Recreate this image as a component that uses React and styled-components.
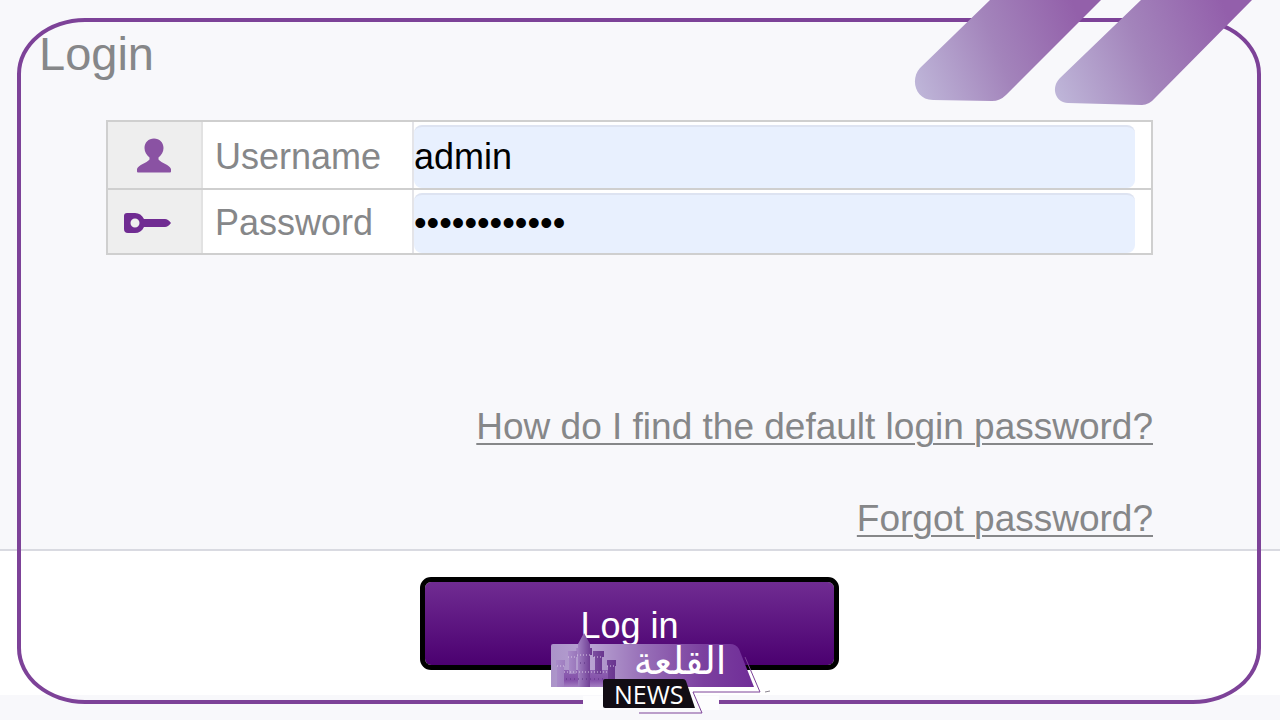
import React, { useState } from 'react';
import styled, { createGlobalStyle } from 'styled-components'

const GlobalStyle = createGlobalStyle`
  * {
    box-sizing: border-box;
  }
  body {
    margin: 0;
    background: #f8f8fb;
    font-family: "Liberation Sans", Arial, sans-serif;
  }
`;

const Page = styled.div`
  position: relative;
  min-height: 100vh;
  overflow: hidden;
`;

const Panel = styled.main`
  padding: 24px 127px 8px 106px;
  border-bottom: 2px solid #d9dae1;
`;

const Title = styled.h1`
  margin: 0 0 36px -67px;
  font-size: 47px;
  line-height: 60px;
  font-weight: 400;
  color: #868789;
`;

const Fields = styled.div`
  border: 2px solid #cfcfcf;
  background: #fff;
`;

const Field = styled.div`
  display: grid;
  grid-template-columns: 95px 211px 1fr;
  height: ${props => props.$height}px;

  & + & {
    border-top: 2px solid #cfcfcf;
  }
`;

const IconCell = styled.div`
  display: flex;
  align-items: center;
  justify-content: flex-end;
  padding: 2px 29px 0 0;
  background: #eee;
  border-right: 2px solid #e2e2e2;
`;

const Label = styled.label`
  display: flex;
  align-items: center;
  padding: 3px 0 0 12px;
  border-right: 2px solid #e4e4e8;
  font-size: 36px;
  color: #868789;
`;

const Input = styled.input`
  min-width: 0;
  margin: 3px 16px 0 0;
  padding: 0 0 2px;
  border: 0;
  border-top: 2px solid #dde3f1;
  border-radius: 8px;
  outline: none;
  background: #e8f0fe;
  color: #000;
  font-family: inherit;
  font-size: 36px;
`;

const Links = styled.nav`
  display: flex;
  flex-direction: column;
  align-items: flex-end;
  gap: 48px;
  padding-top: 150px;
`;

const HelpLink = styled.a`
  font-size: 37px;
  line-height: 44px;
  color: #868789;
  text-decoration-thickness: 2px;
  text-underline-offset: 4px;
`;

const Actions = styled.div`
  display: flex;
  justify-content: center;
  padding: 26px 127px 25px 106px;
  background: #fff;
`;

const LoginButton = styled.button`
  width: 419px;
  height: 93px;
  padding: 4px 0 0;
  border: 5px solid #000;
  border-radius: 11px;
  background: linear-gradient(#702c92, #4b0070) padding-box;
  color: #fff;
  font-family: inherit;
  font-size: 36px;
`;

const Frame = styled.div`
  position: absolute;
  inset: 18px 19px 16px 17px;
  border: 4px solid #7d4298;
  border-radius: 68px / 56px;
  pointer-events: none;
`;

const Stripes = styled.svg`
  position: absolute;
  top: 0;
  right: 20px;
  pointer-events: none;
`;

const Logo = styled.svg`
  position: absolute;
  bottom: 0;
  left: calc(50% - 60px);
  pointer-events: none;
`;

function UserIcon() {
  return (
    <svg width="36" height="36" viewBox="0 0 36 36" fill="#8a52a3" aria-hidden="true">
      <path d="M18 0.500c5.500 0 9.500 4 9.500 9.500 0 4-2 7-5 9.500v2c3 4 11 5 12.500 9.500v2.500q0 1-1 1H2q-1 0-1-1V31c1.500-4.500 9.500-5.500 12.500-9.500v-2c-3-2.500-5-5.500-5-9.500 0-5.500 4-9.500 9.500-9.500z" />
    </svg>
  );
}

function KeyIcon() {
  return (
    <svg width="49" height="22" viewBox="0 0 49 22" fill="#702c92" aria-hidden="true">
      <path fillRule="evenodd" d="M4 1h8c4 0 7 2 9 6h21q3 0 6 4-3 4-6 4H21c-2 4-5 6-9 6H5q-4 0-4-4V4q0-3 3-3zM12 6.500a4.500 4.500 0 1 0 0 9a4.500 4.500 0 1 0 0-9z" />
    </svg>
  );
}

function HeaderStripes() {
  return (
    <Stripes width="360" height="110" viewBox="900 0 360 110" aria-hidden="true">
      <defs>
        <linearGradient id="stripeA" gradientUnits="userSpaceOnUse" x1="915" y1="85" x2="1080" y2="20">
          <stop offset="0" stopColor="#beb5d8" />
          <stop offset="0.500" stopColor="#a384bb" />
          <stop offset="1" stopColor="#9360aa" />
        </linearGradient>
        <linearGradient id="stripeB" gradientUnits="userSpaceOnUse" x1="1055" y1="90" x2="1230" y2="20">
          <stop offset="0" stopColor="#beb5d8" />
          <stop offset="0.500" stopColor="#a384bb" />
          <stop offset="1" stopColor="#935fab" />
        </linearGradient>
      </defs>
      <path fill="url(#stripeA)" d="M990 0L920 68C910 79 915 100 933 100L992 101Q1000 101 1006 95L1101 0z" />
      <path fill="url(#stripeB)" d="M1141 0L1060 78C1050 88 1056 103 1068 103L1142 105Q1149 105 1155 98L1252 0z" />
    </Stripes>
  );
}

function CastleLogo() {
  return (
    <Logo width="200" height="90" viewBox="580 630 200 90" overflow="visible" role="img" aria-label="القلعة NEWS">
      <defs>
        <linearGradient id="banner" x1="0" x2="1" y1="0" y2="0">
          <stop offset="0" stopColor="#ab93c9" />
          <stop offset="0.200" stopColor="#b8a3d2" />
          <stop offset="0.450" stopColor="#9870b8" />
          <stop offset="0.750" stopColor="#7b409f" />
          <stop offset="1" stopColor="#702d98" />
        </linearGradient>
        <linearGradient id="castle" x1="0" x2="0" y1="0" y2="1">
          <stop offset="0" stopColor="#8e62b2" />
          <stop offset="0.600" stopColor="#8450a9" />
          <stop offset="1" stopColor="#a47fc2" />
        </linearGradient>
        <linearGradient id="tower" x1="0" x2="1" y1="0" y2="0">
          <stop offset="0" stopColor="#a98bc9" />
          <stop offset="1" stopColor="#69358f" />
        </linearGradient>
      </defs>
      {/* gap in the frame behind the badge */}
      <path fill="#fdfdfe" d="M583 696H719V710H583z" />
      <path fill="url(#banner)" d="M553 644H730Q736 644 739 649L754 687H551V646Q551 644 553 644z" />
      <path fill="url(#castle)" d="M564 670h44v17h-44z" />
      <g fill="url(#tower)">
        <path d="M584 633l6 11v4h2v7h-2v32h-12v-32h-2v-7h2v-4z" />
        <path d="M568 651h9v6h-1v17h-7v-17h-1zM593 651h11v6h-2v17h-7v-17h-2z" />
        <path d="M556 660h9v6h-1v21h-7v-21h-1zM607 660h9v6h-1v21h-7v-21h-1z" />
      </g>
      <path fill="none" stroke="#d9c9e6" strokeDasharray="1 2" d="M564 672h44M557 666h8M607 666h8M568 657h8M594 657h9M577 655h14" />
      <path fill="none" stroke="#593080" strokeDasharray="1 3" d="M566 679h40M580 663h8" />
      <path fill="none" stroke="#7d4298" strokeLinejoin="round" d="M745 657l15 35h-67l9 21h-63" />
      <path stroke="#8b8590" d="M765 692l5-1" />
      <path fill="#120d14" d="M605 679H683Q685 679 686 681L695 708H605Q603 708 603 706V681Q603 679 605 679z" />
      <text x="680" y="674" textAnchor="middle" fill="#fff" fontFamily="DejaVu Sans, sans-serif" fontSize="38">القلعة</text>
      <text x="614" y="704" fill="#fff" fontFamily="Open Sans, sans-serif" fontSize="25">NEWS</text>
    </Logo>
  );
}

function App() {
  const [username, setUsername] = useState("admin");
  const [password, setPassword] = useState("adminadmin12");

  return (
    <Page>
      <GlobalStyle />
      <Panel>
        <Title>Login</Title>
        <Fields>
          <Field $height={66}>
            <IconCell><UserIcon /></IconCell>
            <Label htmlFor="username">Username</Label>
            <Input id="username" type="text" value={username} onChange={e => setUsername(e.target.value)} />
          </Field>
          <Field $height={65}>
            <IconCell><KeyIcon /></IconCell>
            <Label htmlFor="password">Password</Label>
            <Input id="password" type="password" value={password} onChange={e => setPassword(e.target.value)} />
          </Field>
        </Fields>
        <Links>
          <HelpLink href="#default-password">How do I find the default login password?</HelpLink>
          <HelpLink href="#forgot">Forgot password?</HelpLink>
        </Links>
      </Panel>
      <Actions>
        <LoginButton type="button">Log in</LoginButton>
      </Actions>
      <Frame />
      <HeaderStripes />
      <CastleLogo />
    </Page>
  );
}

export default App;
